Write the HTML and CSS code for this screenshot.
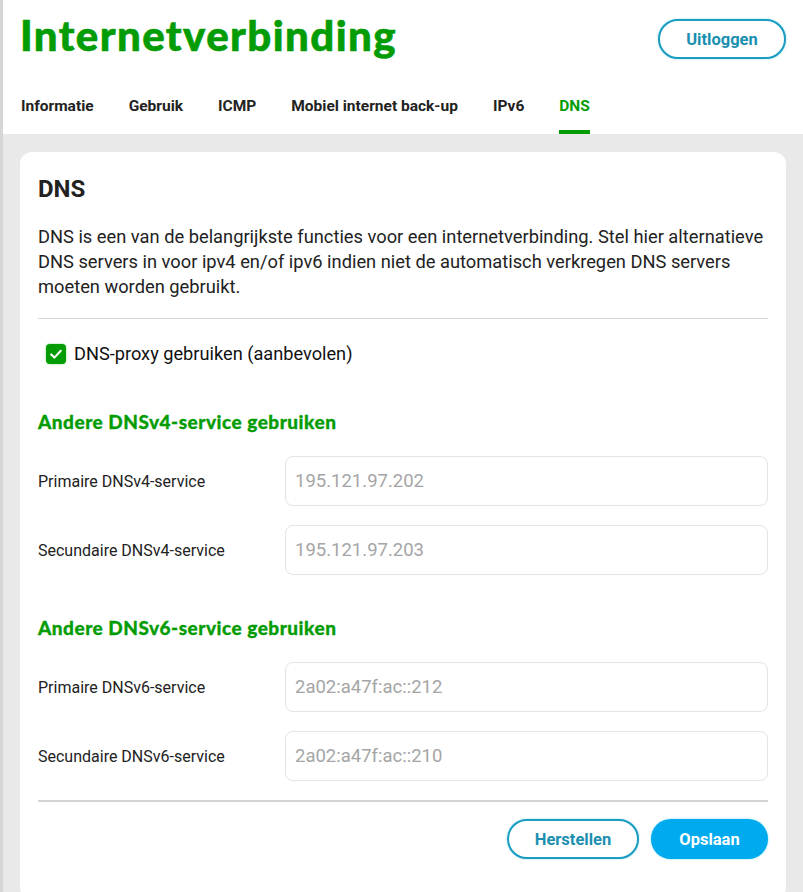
FILE: index.html
```html
<!DOCTYPE html>
<html lang="nl">
<head>
    <meta charset="UTF-8">
    <meta name="viewport" content="width=device-width, initial-scale=1.0">
    <title>Internetverbinding - DNS</title>
    <link rel="stylesheet" href="styles.css">
</head>
<body>

<div class="app">
    <header>
        <div class="topbar">
            <h1>Internetverbinding</h1>
            <button class="btn btn-outline btn-logout">Uitloggen</button>
        </div>
        <nav class="tabs">
            <a href="#">Informatie</a>
            <a href="#">Gebruik</a>
            <a href="#">ICMP</a>
            <a href="#">Mobiel internet back-up</a>
            <a href="#">IPv6</a>
            <a href="#" class="active">DNS</a>
        </nav>
    </header>

    <main>
        <section class="card">
            <h2>DNS</h2>
            <p class="intro">DNS is een van de belangrijkste functies voor een internetverbinding. Stel hier alternatieve DNS servers in voor ipv4 en/of ipv6 indien niet de automatisch verkregen DNS servers moeten worden gebruikt.</p>

            <hr>

            <label class="check">
                <span class="box">
                    <svg viewBox="0 0 20 20" width="16" height="16"><path d="M4 10.5l4 4 8-8.5" fill="none" stroke="#fff" stroke-width="2.6" stroke-linecap="round" stroke-linejoin="round"/></svg>
                </span>
                DNS-proxy gebruiken (aanbevolen)
            </label>

            <h3>Andere DNSv4-service gebruiken</h3>
            <div class="field">
                <label>Primaire DNSv4-service</label>
                <input type="text" placeholder="195.121.97.202">
            </div>
            <div class="field">
                <label>Secundaire DNSv4-service</label>
                <input type="text" placeholder="195.121.97.203">
            </div>

            <h3 class="next">Andere DNSv6-service gebruiken</h3>
            <div class="field">
                <label>Primaire DNSv6-service</label>
                <input type="text" placeholder="2a02:a47f:ac::212">
            </div>
            <div class="field">
                <label>Secundaire DNSv6-service</label>
                <input type="text" placeholder="2a02:a47f:ac::210">
            </div>

            <hr class="bottom-line">

            <div class="actions">
                <button class="btn btn-outline">Herstellen</button>
                <button class="btn btn-primary">Opslaan</button>
            </div>
        </section>
    </main>
</div>

</body>
</html>
```

FILE: styles.css
```css
body {
    margin: 0;
    padding: 0;
    font-family: Roboto, "Liberation Sans", sans-serif;
    color: #222;
    background: #e9e9e9;
}
.app {
    border-left: 3px solid #d6d6d6;
    min-height: 892px;
}
header {
    background: #fff;
    padding: 0 17px 0 17px;
}
.topbar {
    display: flex;
    justify-content: space-between;
    align-items: center;
    height: 74px;
}
.topbar h1 {
    margin: 0;
    font-family: Lato, sans-serif;
    font-weight: 900;
    font-size: 42px;
    color: #049c04;
    letter-spacing: 1.4px;
    position: relative;
    top: -2px;
    -webkit-text-stroke: 0.6px #049c04;
}
.btn {
    font-family: Roboto, sans-serif;
    font-weight: 700;
    font-size: 16.5px;
    height: 40px;
    border-radius: 20px;
    cursor: pointer;
}
.btn-outline {
    background: #fff;
    color: #1b8fb0;
    border: 2px solid #1b9cc0;
    box-shadow: 0 0 2px rgba(0, 190, 230, 0.5);
}
.btn-logout {
    width: 128px;
    margin-top: 4px;
}
.btn-primary {
    background: #00aaee;
    color: #fff;
    border: none;
    box-shadow: 0 0 2px rgba(0, 190, 240, 0.6);
}
.tabs {
    display: flex;
    gap: 35px;
    padding-left: 1px;
    height: 60px;
}
.tabs a {
    text-decoration: none;
    color: #222;
    font-weight: 700;
    font-size: 15.5px;
    line-height: 64px;
    height: 56px;
    border-bottom: 4px solid transparent;
}
.tabs a.active {
    color: #049c04;
    border-bottom-color: #049c04;
}
main {
    padding: 18px 17px 0 17px;
}
.card {
    background: #fff;
    border-radius: 12px;
    padding: 18px 18px 40px 18px;
}
.card h2 {
    margin: 4px 0 0 0;
    font-size: 24px;
    font-weight: 700;
    color: #222;
    line-height: 30px;
}
.intro {
    margin: 20px 0 0 0;
    font-size: 18.3px;
    line-height: 25px;
    color: #222;
}
hr {
    border: none;
    border-top: 1px solid #d8d8d8;
    margin: 19px 0 0 0;
}
.check {
    display: flex;
    align-items: center;
    gap: 8px;
    margin: 24px 0 0 8px;
    font-size: 18.2px;
    color: #111;
}
.box {
    width: 20px;
    height: 20px;
    background: #049c04;
    border-radius: 4px;
    display: flex;
    align-items: center;
    justify-content: center;
    box-shadow: 0 0 2px rgba(10, 180, 10, 0.6);
}
.card h3 {
    margin: 46px 0 23px 0;
    font-family: Lato, sans-serif;
    font-weight: 900;
    font-size: 19px;
    letter-spacing: 0.5px;
    color: #049c04;
    -webkit-text-stroke: 0.3px #049c04;
}
.card h3.next {
    margin-top: 41px;
}
.field {
    display: flex;
    align-items: center;
    margin-bottom: 19px;
}
.field label {
    width: 247px;
    font-size: 16px;
    color: #222;
}
.field input {
    flex: 1;
    height: 50px;
    box-sizing: border-box;
    border: 1px solid #e4e4e4;
    border-radius: 8px;
    padding: 0 9px;
    font-family: Roboto, sans-serif;
    font-size: 18.5px;
    color: #222;
}
.field input::placeholder {
    color: #a5a5a5;
}
.bottom-line {
    margin-top: 0;
    border-top-color: #d4d4d4;
    border-top-width: 2px;
}
.actions {
    display: flex;
    justify-content: flex-end;
    gap: 12px;
    margin-top: 17px;
}
.actions .btn-outline {
    width: 132px;
}
.actions .btn-primary {
    width: 117px;
}
```
